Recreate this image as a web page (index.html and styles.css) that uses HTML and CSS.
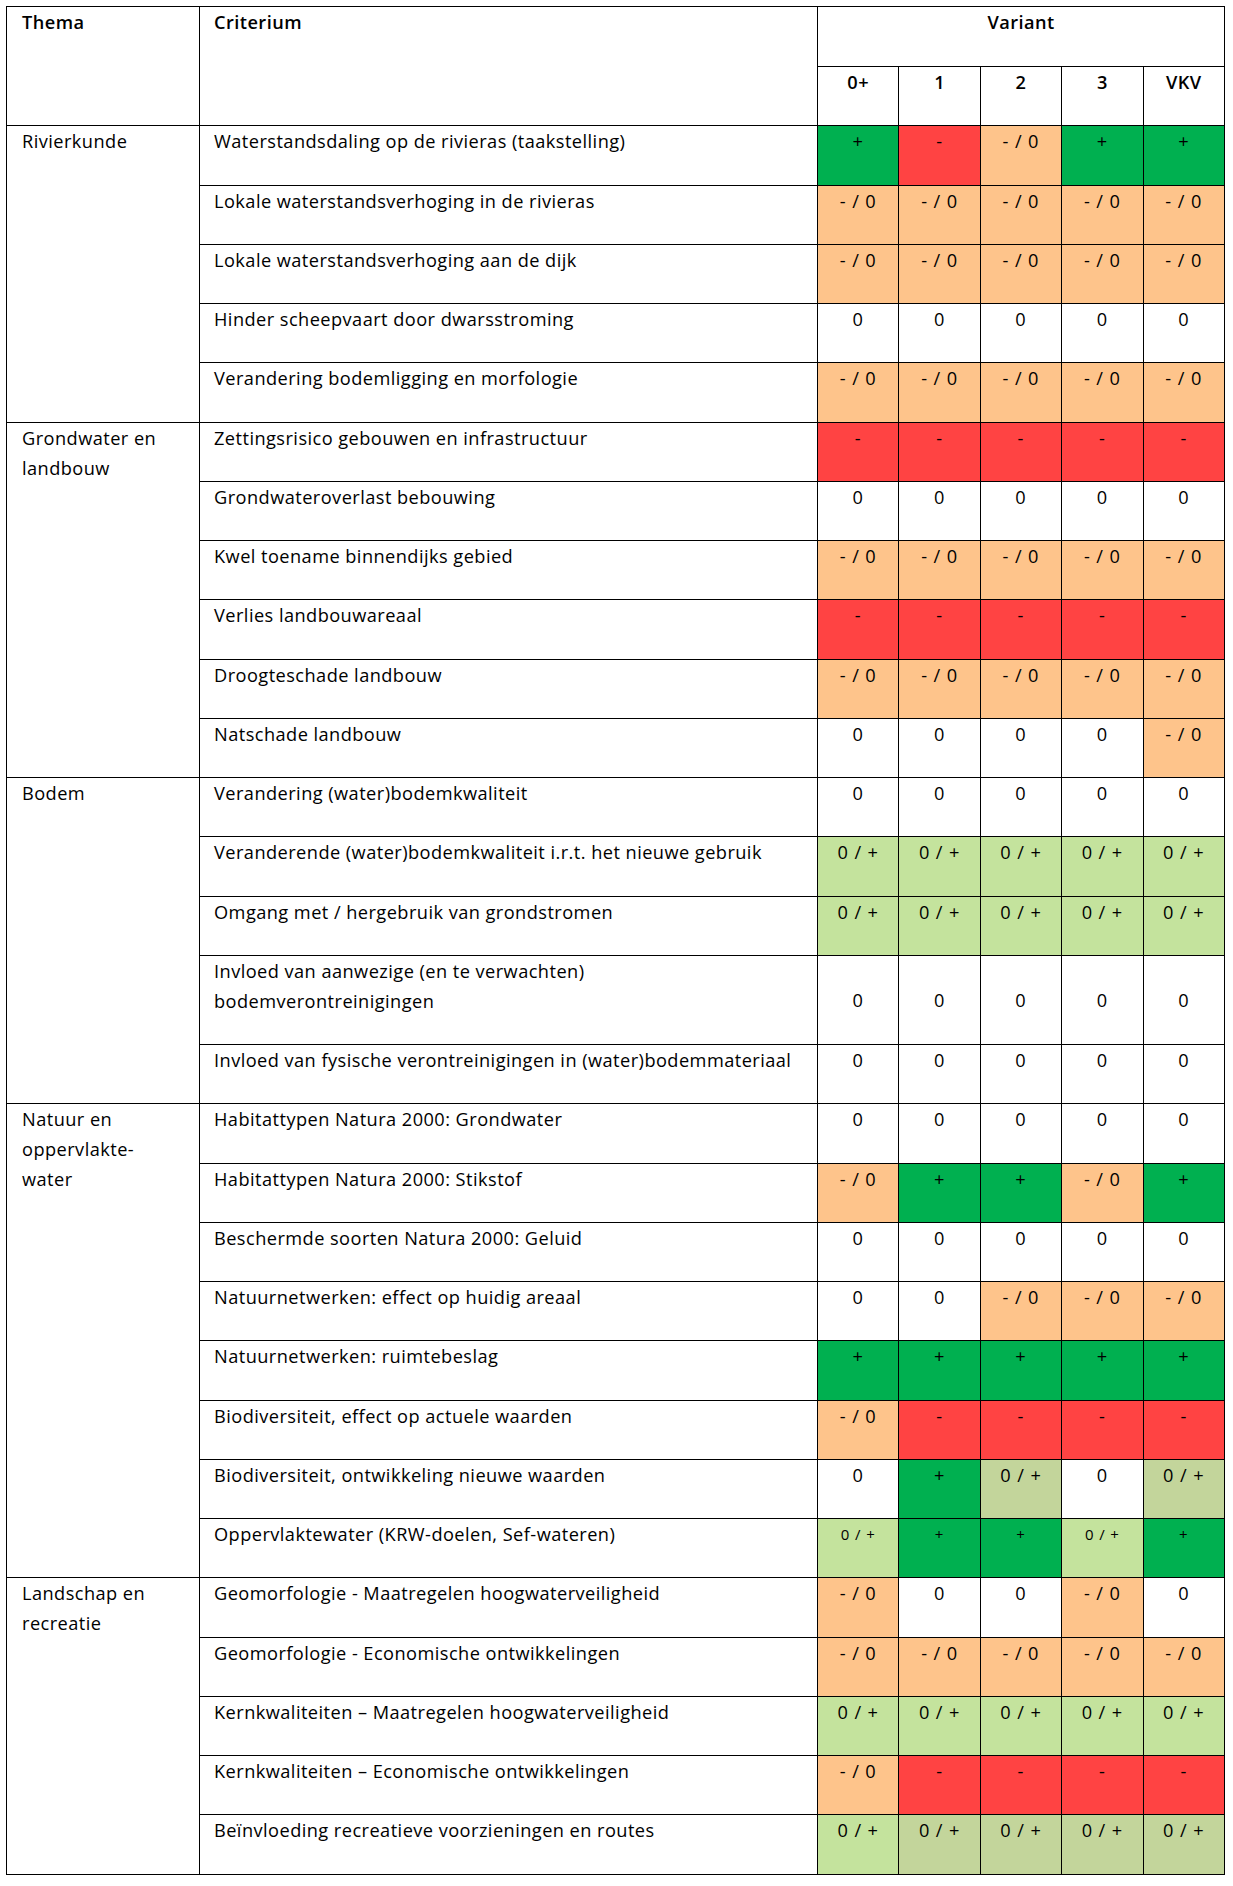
FILE: index.html
```html
<!DOCTYPE html>
<html lang="nl">
<head>
<meta charset="utf-8">
<title>Effectbeoordeling varianten</title>
<link rel="stylesheet" href="styles.css">
</head>
<body>
<table class="matrix">
  <colgroup>
    <col class="c-thema">
    <col class="c-crit">
    <col class="c-var"><col class="c-var"><col class="c-var"><col class="c-var"><col class="c-var">
  </colgroup>
  <thead>
    <tr class="h1">
      <th rowspan="2" class="thema">Thema</th>
      <th rowspan="2" class="crit">Criterium</th>
      <th colspan="5" class="var">Variant</th>
    </tr>
    <tr class="h2">
      <th class="var">0+</th><th class="var">1</th><th class="var">2</th><th class="var">3</th><th class="var">VKV</th>
    </tr>
  </thead>
  <tbody>
    <tr>
      <td rowspan="5" class="thema">Rivierkunde</td>
      <td class="crit">Waterstandsdaling op de rivieras (taakstelling)</td>
      <td class="v g">+</td><td class="v r">-</td><td class="v p">- / 0</td><td class="v g">+</td><td class="v g">+</td>
    </tr>
    <tr>
      <td class="crit">Lokale waterstandsverhoging in de rivieras</td>
      <td class="v p">- / 0</td><td class="v p">- / 0</td><td class="v p">- / 0</td><td class="v p">- / 0</td><td class="v p">- / 0</td>
    </tr>
    <tr>
      <td class="crit">Lokale waterstandsverhoging aan de dijk</td>
      <td class="v p">- / 0</td><td class="v p">- / 0</td><td class="v p">- / 0</td><td class="v p">- / 0</td><td class="v p">- / 0</td>
    </tr>
    <tr>
      <td class="crit">Hinder scheepvaart door dwarsstroming</td>
      <td class="v">0</td><td class="v">0</td><td class="v">0</td><td class="v">0</td><td class="v">0</td>
    </tr>
    <tr>
      <td class="crit">Verandering bodemligging en morfologie</td>
      <td class="v p">- / 0</td><td class="v p">- / 0</td><td class="v p">- / 0</td><td class="v p">- / 0</td><td class="v p">- / 0</td>
    </tr>

    <tr>
      <td rowspan="6" class="thema">Grondwater en<br>landbouw</td>
      <td class="crit">Zettingsrisico gebouwen en infrastructuur</td>
      <td class="v r">-</td><td class="v r">-</td><td class="v r">-</td><td class="v r">-</td><td class="v r">-</td>
    </tr>
    <tr>
      <td class="crit">Grondwateroverlast bebouwing</td>
      <td class="v">0</td><td class="v">0</td><td class="v">0</td><td class="v">0</td><td class="v">0</td>
    </tr>
    <tr>
      <td class="crit">Kwel toename binnendijks gebied</td>
      <td class="v p">- / 0</td><td class="v p">- / 0</td><td class="v p">- / 0</td><td class="v p">- / 0</td><td class="v p">- / 0</td>
    </tr>
    <tr>
      <td class="crit">Verlies landbouwareaal</td>
      <td class="v r">-</td><td class="v r">-</td><td class="v r">-</td><td class="v r">-</td><td class="v r">-</td>
    </tr>
    <tr>
      <td class="crit">Droogteschade landbouw</td>
      <td class="v p">- / 0</td><td class="v p">- / 0</td><td class="v p">- / 0</td><td class="v p">- / 0</td><td class="v p">- / 0</td>
    </tr>
    <tr>
      <td class="crit">Natschade landbouw</td>
      <td class="v">0</td><td class="v">0</td><td class="v">0</td><td class="v">0</td><td class="v p">- / 0</td>
    </tr>

    <tr>
      <td rowspan="5" class="thema">Bodem</td>
      <td class="crit">Verandering (water)bodemkwaliteit</td>
      <td class="v">0</td><td class="v">0</td><td class="v">0</td><td class="v">0</td><td class="v">0</td>
    </tr>
    <tr>
      <td class="crit">Veranderende (water)bodemkwaliteit i.r.t. het nieuwe gebruik</td>
      <td class="v lg">0 / +</td><td class="v lg">0 / +</td><td class="v lg">0 / +</td><td class="v lg">0 / +</td><td class="v lg">0 / +</td>
    </tr>
    <tr>
      <td class="crit">Omgang met / hergebruik van grondstromen</td>
      <td class="v lg">0 / +</td><td class="v lg">0 / +</td><td class="v lg">0 / +</td><td class="v lg">0 / +</td><td class="v lg">0 / +</td>
    </tr>
    <tr class="tall">
      <td class="crit">Invloed van aanwezige (en te verwachten)<br>bodemverontreinigingen</td>
      <td class="v mid">0</td><td class="v mid">0</td><td class="v mid">0</td><td class="v mid">0</td><td class="v mid">0</td>
    </tr>
    <tr>
      <td class="crit">Invloed van fysische verontreinigingen in (water)bodemmateriaal</td>
      <td class="v">0</td><td class="v">0</td><td class="v">0</td><td class="v">0</td><td class="v">0</td>
    </tr>

    <tr>
      <td rowspan="8" class="thema">Natuur en<br>oppervlakte-<br>water</td>
      <td class="crit">Habitattypen Natura 2000: Grondwater</td>
      <td class="v">0</td><td class="v">0</td><td class="v">0</td><td class="v">0</td><td class="v">0</td>
    </tr>
    <tr>
      <td class="crit">Habitattypen Natura 2000: Stikstof</td>
      <td class="v p">- / 0</td><td class="v g">+</td><td class="v g">+</td><td class="v p">- / 0</td><td class="v g">+</td>
    </tr>
    <tr>
      <td class="crit">Beschermde soorten Natura 2000: Geluid</td>
      <td class="v">0</td><td class="v">0</td><td class="v">0</td><td class="v">0</td><td class="v">0</td>
    </tr>
    <tr>
      <td class="crit">Natuurnetwerken: effect op huidig areaal</td>
      <td class="v">0</td><td class="v">0</td><td class="v p">- / 0</td><td class="v p">- / 0</td><td class="v p">- / 0</td>
    </tr>
    <tr>
      <td class="crit">Natuurnetwerken: ruimtebeslag</td>
      <td class="v g">+</td><td class="v g">+</td><td class="v g">+</td><td class="v g">+</td><td class="v g">+</td>
    </tr>
    <tr>
      <td class="crit">Biodiversiteit, effect op actuele waarden</td>
      <td class="v p">- / 0</td><td class="v r">-</td><td class="v r">-</td><td class="v r">-</td><td class="v r">-</td>
    </tr>
    <tr>
      <td class="crit">Biodiversiteit, ontwikkeling nieuwe waarden</td>
      <td class="v">0</td><td class="v g">+</td><td class="v ol">0 / +</td><td class="v">0</td><td class="v ol">0 / +</td>
    </tr>
    <tr>
      <td class="crit">Oppervlaktewater (KRW-doelen, Sef-wateren)</td>
      <td class="v lg sm">0 / +</td><td class="v g sm">+</td><td class="v g sm">+</td><td class="v lg sm">0 / +</td><td class="v g sm">+</td>
    </tr>

    <tr>
      <td rowspan="5" class="thema">Landschap en<br>recreatie</td>
      <td class="crit">Geomorfologie - Maatregelen hoogwaterveiligheid</td>
      <td class="v p">- / 0</td><td class="v">0</td><td class="v">0</td><td class="v p">- / 0</td><td class="v">0</td>
    </tr>
    <tr>
      <td class="crit">Geomorfologie - Economische ontwikkelingen</td>
      <td class="v p">- / 0</td><td class="v p">- / 0</td><td class="v p">- / 0</td><td class="v p">- / 0</td><td class="v p">- / 0</td>
    </tr>
    <tr>
      <td class="crit">Kernkwaliteiten – Maatregelen hoogwaterveiligheid</td>
      <td class="v lg">0 / +</td><td class="v lg">0 / +</td><td class="v lg">0 / +</td><td class="v lg">0 / +</td><td class="v lg">0 / +</td>
    </tr>
    <tr>
      <td class="crit">Kernkwaliteiten – Economische ontwikkelingen</td>
      <td class="v p">- / 0</td><td class="v r">-</td><td class="v r">-</td><td class="v r">-</td><td class="v r">-</td>
    </tr>
    <tr>
      <td class="crit">Beïnvloeding recreatieve voorzieningen en routes</td>
      <td class="v lg">0 / +</td><td class="v ol">0 / +</td><td class="v ol">0 / +</td><td class="v ol">0 / +</td><td class="v ol">0 / +</td>
    </tr>
  </tbody>
</table>
</body>
</html>
```

FILE: styles.css
```css
html, body {
  margin: 0;
  padding: 0;
  background: #ffffff;
}

body {
  padding: 6px 0 0 6px;
  font-family: "Open Sans", "Noto Sans", "Liberation Sans", sans-serif;
  font-size: 18.2px;
  letter-spacing: 0.45px;
  color: #000000;
}

.matrix {
  border-collapse: collapse;
  table-layout: fixed;
  width: 1218px;
}

.c-thema { width: 193px; }
.c-crit { width: 618px; }
.c-var { width: 81.4px; }

.matrix th,
.matrix td {
  border: 1px solid #000000;
  vertical-align: top;
  line-height: 30px;
  padding: 0 14px;
  text-align: left;
  font-weight: normal;
}

.matrix th {
  font-weight: 600;
}

.matrix .thema {
  padding-left: 15px;
}

.matrix .var,
.matrix .v {
  text-align: center;
  padding: 0;
}

.matrix .v {
  letter-spacing: 0.9px;
}

.h1 th { height: 59px; }
.h2 th { height: 58.3px; }

.matrix tbody td { height: 58.26px; }
.matrix tbody tr.tall td { height: 88.26px; }

.matrix .v.mid { vertical-align: middle; }

.g { background: #00b050; }
.r { background: #ff4343; }
.p { background: #fec48b; }
.lg { background: #c4e39d; }
.ol { background: #c3d59b; }

.sm { font-size: 15px; }
```
